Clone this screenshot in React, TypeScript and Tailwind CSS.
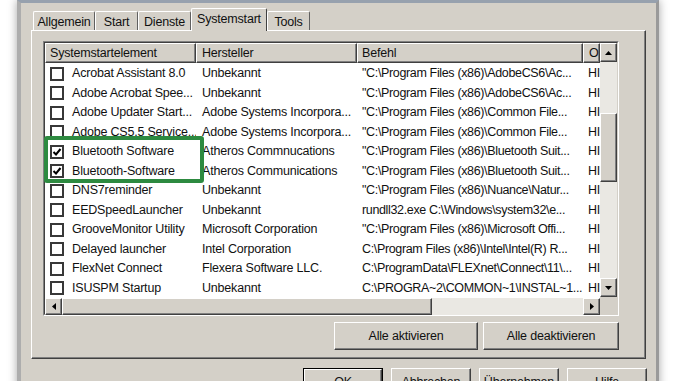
import React from 'react';

type Entry = {
  name: string;
  vendor: string;
  cmd: string;
  checked?: boolean;
};

const entries: Entry[] = [
  { name: 'Acrobat Assistant 8.0', vendor: 'Unbekannt', cmd: '"C:\\Program Files (x86)\\AdobeCS6\\Ac...' },
  { name: 'Adobe Acrobat Spee...', vendor: 'Unbekannt', cmd: '"C:\\Program Files (x86)\\AdobeCS6\\Ac...' },
  { name: 'Adobe Updater Start...', vendor: 'Adobe Systems Incorpora...', cmd: '"C:\\Program Files (x86)\\Common File...' },
  { name: 'Adobe CS5.5 Service...', vendor: 'Adobe Systems Incorpora...', cmd: '"C:\\Program Files (x86)\\Common File...' },
  { name: 'Bluetooth Software', vendor: 'Atheros Commnucations', cmd: '"C:\\Program Files (x86)\\Bluetooth Suit...', checked: true },
  { name: 'Bluetooth-Software', vendor: 'Atheros Communications', cmd: '"C:\\Program Files (x86)\\Bluetooth Suit...', checked: true },
  { name: 'DNS7reminder', vendor: 'Unbekannt', cmd: '"C:\\Program Files (x86)\\Nuance\\Natur...' },
  { name: 'EEDSpeedLauncher', vendor: 'Unbekannt', cmd: 'rundll32.exe C:\\Windows\\system32\\e...' },
  { name: 'GrooveMonitor Utility', vendor: 'Microsoft Corporation', cmd: '"C:\\Program Files (x86)\\Microsoft Offi...' },
  { name: 'Delayed launcher', vendor: 'Intel Corporation', cmd: 'C:\\Program Files (x86)\\Intel\\Intel(R) R...' },
  { name: 'FlexNet Connect', vendor: 'Flexera Software LLC.', cmd: 'C:\\ProgramData\\FLEXnet\\Connect\\11\\...' },
  { name: 'ISUSPM Startup', vendor: 'Unbekannt', cmd: 'C:\\PROGRA~2\\COMMON~1\\INSTAL~1...' },
];

const tabs = [
  { label: 'Allgemein', w: 'w-[62px]' },
  { label: 'Start', w: 'w-[43px]' },
  { label: 'Dienste', w: 'w-[53px]' },
  { label: 'Systemstart', w: 'w-[76px]', active: true },
  { label: 'Tools', w: 'w-[43px]' },
];

const bevel =
  'bg-[#d4d0c8] border border-t-white border-l-white border-r-[#404040] border-b-[#404040] shadow-[inset_-1px_-1px_0_#808080]';

function Arrow({ dir }: { dir: 'up' | 'down' | 'left' | 'right' }) {
  if (dir === 'up' || dir === 'down') {
    return (
      <svg width="7" height="4" viewBox="0 0 7 4">
        <path d={dir === 'up' ? 'M0 4 L3.5 0 L7 4Z' : 'M0 0 L3.5 4 L7 0Z'} fill="#000" />
      </svg>
    );
  }
  return (
    <svg width="4" height="7" viewBox="0 0 4 7">
      <path d={dir === 'left' ? 'M4 0 L0 3.5 L4 7Z' : 'M0 0 L4 3.5 L0 7Z'} fill="#000" />
    </svg>
  );
}

function CheckBox({ checked }: { checked?: boolean }) {
  return (
    <div className="w-[14px] h-[14px] shrink-0 border-2 border-[#383838] bg-white flex items-center justify-center">
      {checked && (
        <svg width="10" height="10" viewBox="0 0 10 10">
          <path d="M1.5 5 L4 7.5 L8.5 2" fill="none" stroke="#000" strokeWidth="2" />
        </svg>
      )}
    </div>
  );
}

function Button({ label, w, isDefault }: { label: string; w: string; isDefault?: boolean }) {
  return (
    <div className={`${w} h-[28px] ${isDefault ? 'border border-black' : ''}`}>
      <div className={`${bevel} h-full flex items-center justify-center`}>{label}</div>
    </div>
  );
}

export default function App() {
  return (
    <div className="relative w-[678px] h-[381px] overflow-hidden bg-white pl-[17px] font-['Liberation_Sans',Arial,sans-serif] text-[12.5px] tracking-[-0.2px] text-[#111]">
      <div className="w-[642px] h-[420px] bg-[#d4d0c8] border-l-4 border-r-[3px] border-t-[3px] border-l-[#adadad] border-r-[#9a9a9a] border-t-[#97a1ae] shadow-[0_0_9px_rgba(0,0,0,0.35)] pl-[10px] pt-[5px]">
        {/* tabs */}
        <div className="flex items-end h-[22px] pl-[2px]">
          {tabs.map((t) =>
            t.active ? (
              <div
                key={t.label}
                className={`${t.w} h-[23px] -mb-px relative z-10 bg-[#d4d0c8] border-t border-l border-r border-t-white border-l-white border-r-[#404040] rounded-t-[2px] flex items-center justify-center pb-[2px]`}
              >
                {t.label}
              </div>
            ) : (
              <div
                key={t.label}
                className={`${t.w} h-[19px] bg-[#d4d0c8] border-t border-l border-r border-t-white border-l-white border-r-[#606060] rounded-t-[2px] flex items-center justify-center pt-[2px]`}
              >
                {t.label}
              </div>
            )
          )}
        </div>

        {/* tab panel */}
        <div className="w-[615px] h-[329px] flex flex-col border border-t-white border-l-white border-r-[#404040] border-b-[#404040] shadow-[inset_-1px_-1px_0_#808080] pt-[10px] pl-[11px]">
          {/* list view */}
          <div className="w-[576px] h-[275px] border border-t-[#808080] border-l-[#808080] border-r-white border-b-white">
            <div className="flex h-full border border-t-[#404040] border-l-[#404040] border-r-[#d4d0c8] border-b-[#d4d0c8] bg-white">
              <div className="flex flex-col w-[555px]">
                <div className="flex h-[20px] shrink-0">
                  <div className={`${bevel} w-[151px] pl-[4px] flex items-center`}>Systemstartelement</div>
                  <div className={`${bevel} w-[161px] pl-[5px] flex items-center`}>Hersteller</div>
                  <div className={`${bevel} w-[226px] pl-[4px] flex items-center`}>Befehl</div>
                  <div className={`${bevel} w-[17px] pl-[5px] flex items-center overflow-hidden`}>O</div>
                </div>
                <div className="flex-1 pt-px">
                  {entries.map((e) => (
                    <div key={e.name} className="flex items-center h-[19.5px] whitespace-nowrap">
                      <div className="w-[151px] pl-[5px] flex items-center gap-[8px] overflow-hidden">
                        <CheckBox checked={e.checked} />
                        <span>{e.name}</span>
                      </div>
                      <div className="w-[161px] pl-[6px] overflow-hidden">{e.vendor}</div>
                      <div className="w-[226px] pl-[5px] overflow-hidden tracking-[-0.35px]">{e.cmd}</div>
                      <div className="w-[17px] pl-[5px]">HI</div>
                    </div>
                  ))}
                </div>
                {/* horizontal scrollbar */}
                <div className="flex h-[17px] shrink-0 bg-[#eae8e3]">
                  <div className={`${bevel} w-[17px] flex items-center justify-center`}>
                    <Arrow dir="left" />
                  </div>
                  <div className={`${bevel} w-[370px]`} />
                  <div className="flex-1" />
                  <div className={`${bevel} w-[17px] flex items-center justify-center`}>
                    <Arrow dir="right" />
                  </div>
                </div>
              </div>
              {/* vertical scrollbar */}
              <div className="flex flex-col w-[17px]">
                <div className={`${bevel} h-[19px] flex items-center justify-center`}>
                  <Arrow dir="up" />
                </div>
                <div className="flex-1 bg-[#eae8e3]">
                  <div className={`${bevel} mt-[51px] h-[69px]`} />
                </div>
                <div className={`${bevel} h-[19px] flex items-center justify-center`}>
                  <Arrow dir="down" />
                </div>
                <div className="h-[17px] bg-[#d4d0c8]" />
              </div>
            </div>
          </div>

          <div className="w-[576px] mt-[6px] flex justify-end gap-[5px]">
            <Button label="Alle aktivieren" w="w-[144px]" />
            <Button label="Alle deaktivieren" w="w-[136px]" />
          </div>
        </div>

        {/* dialog buttons */}
        <div className="w-[616px] mt-[9px] flex justify-end gap-[8px]">
          <Button label="OK" w="w-[80px]" isDefault />
          <Button label="Abbrechen" w="w-[80px]" />
          <Button label="Übernehmen" w="w-[80px]" />
          <Button label="Hilfe" w="w-[80px]" />
        </div>
      </div>

      {/* green highlight */}
      <div className="absolute left-[44px] top-[136px] w-[160px] h-[47px] border-4 border-[#2d8a40] rounded-[3px]" />
    </div>
  );
}
